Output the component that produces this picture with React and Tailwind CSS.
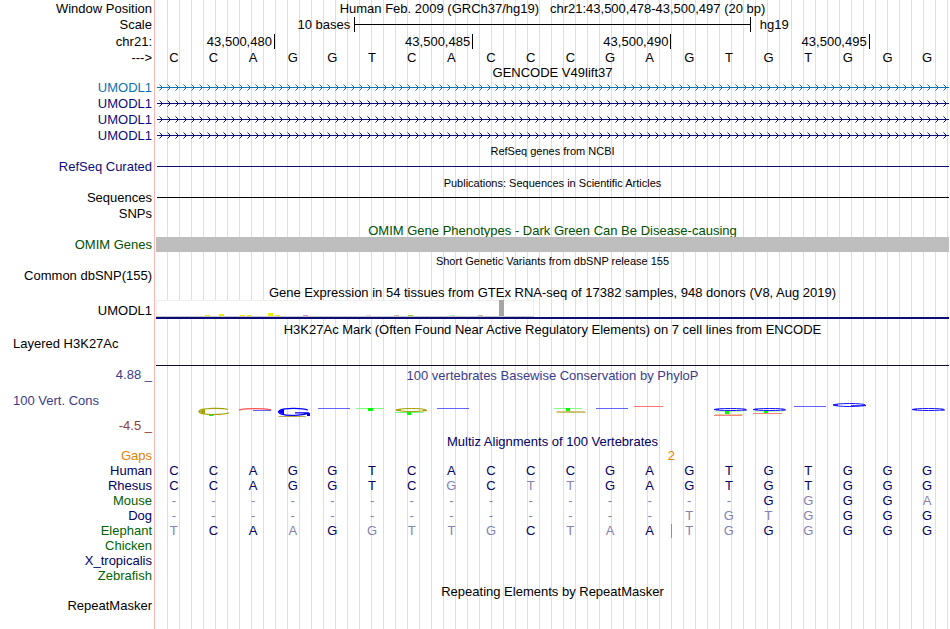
import clsx from 'clsx';

const SEQUENCE = 'CCAGGTCACCCGAGTGTGGG';

const TRANSCRIPTS = [
  { id: 'tx1', label: 'text-[#0c72b2]', stroke: '#0c72b2' },
  { id: 'tx2', label: 'text-[#0c0c78]', stroke: '#0c0c78' },
  { id: 'tx3', label: 'text-[#0c0c78]', stroke: '#0c0c78' },
  { id: 'tx4', label: 'text-[#0c0c78]', stroke: '#0c0c78' },
];

const POSITIONS = [
  { label: '43,500,480', width: 'w-[15%]' },
  { label: '43,500,485', width: 'w-1/4' },
  { label: '43,500,490', width: 'w-1/4' },
  { label: '43,500,495', width: 'w-1/4' },
];

// Lower case = base differs from human, drawn lighter
const SPECIES = [
  { name: 'Human', color: 'text-[#000064]', bases: 'CCAGGTCACCCGAGTGTGGG' },
  { name: 'Rhesus', color: 'text-[#000064]', bases: 'CCAGGTCgCttGAGTGTGGG' },
  { name: 'Mouse', color: 'text-[#006400]', bases: '---------------GgGGa' },
  { name: 'Dog', color: 'text-[#000064]', bases: '-------------tgtgGGG' },
  { name: 'Elephant', color: 'text-[#006400]', bases: 'tCAaGgttgCtaAtgGgGGG', insert: true },
  { name: 'Chicken', color: 'text-[#006400]' },
  { name: 'X_tropicalis', color: 'text-[#000064]' },
  { name: 'Zebrafish', color: 'text-[#006400]' },
];

const TISSUES = [
  { x: 49, h: 1, fill: '#eeee00' },
  { x: 63, h: 2, fill: '#eeee00' },
  { x: 84, h: 1, fill: '#eeee00' },
  { x: 91, h: 1, fill: '#eeee00' },
  { x: 112, h: 3, fill: '#eeee00' },
  { x: 119, h: 1, fill: '#eeee00' },
  { x: 147, h: 1, fill: '#da8fd6' },
  { x: 210, h: 1, fill: '#eed5d2' },
  { x: 238, h: 1, fill: '#cdb79e' },
  { x: 252, h: 1, fill: '#9acd32' },
  { x: 294, h: 1, fill: '#b4eeb4' },
  { x: 322, h: 1, fill: '#cdb79e' },
  { x: 343, h: 16, fill: '#a6a6a6' },
];

/** One browser line: label on the left, track drawing on the right. */
function Row({ label, labelClass = 'text-black', align = 'text-right pr-[2px]', height = 'h-[15px]', children }) {
  return (
    <div className={clsx('flex', height)}>
      <div className="w-[156px] shrink-0 bg-white pr-px">
        <div className={clsx('flex h-full flex-col justify-center border-r border-[#ffb4b4] whitespace-pre', align, labelClass)}>
          {label}
        </div>
      </div>
      <div className="relative flex min-w-0 flex-1 flex-col justify-center pr-px">{children}</div>
    </div>
  );
}

function TitleRow({ children, label, labelClass, height, low, className = 'text-black' }) {
  return (
    <Row label={label} labelClass={labelClass} height={height}>
      <h2 className={clsx('text-center whitespace-pre', low ? 'pt-[3px]' : 'pt-px', className)}>{children}</h2>
    </Row>
  );
}

function Bases({ bases, className }) {
  return (
    <div className={clsx('-ml-[2px] mr-[2px] grid grid-cols-20 text-center', className)}>
      {bases.split('').map((b, i) => (
        <span key={i} className={b === b.toUpperCase() && b !== '-' ? '' : 'text-[#8282b4]'}>
          {b.toUpperCase()}
        </span>
      ))}
    </div>
  );
}

function Transcript({ id, stroke }) {
  return (
    <div className="pl-px">
      <svg className="block h-4 w-full" aria-hidden="true">
        <defs>
          <pattern id={id} width="8" height="16" patternUnits="userSpaceOnUse">
            <path d="M2.5 5.5L5.5 8.5L2.5 11.5" fill="none" stroke={stroke} />
          </pattern>
        </defs>
        <rect width="100%" height="16" fill={`url(#${id})`} />
        <rect y="8" width="100%" height="1" fill={stroke} />
      </svg>
    </div>
  );
}

function GtexBars() {
  return (
    <svg className="block" width="378" height="17" viewBox="0 0 378 17" aria-hidden="true">
      <rect x="0.5" y="0.5" width="377" height="16" fill="#fff" stroke="#f0f0f0" />
      <rect y="16" width="378" height="1" fill="#c8c8c8" />
      {TISSUES.map((t) => (
        <rect key={t.x} x={t.x} y={16 - t.h} width="5" height={t.h} fill={t.fill} />
      ))}
    </svg>
  );
}

// Flattened logo shapes: ring = round base, bar = thin base, stem = centre of a T
function Ring({ x, y, w, h, color }) {
  return (
    <g fill="none" stroke={color}>
      <ellipse cx={x + w / 2} cy={y + h / 2} rx={w / 2 - 1} ry={h / 2 - 0.5} />
      <line x1={x} x2={x + 5} y1={y + h / 2} y2={y + h / 2} strokeWidth={h / 2.5} />
      <line x1={x + w - 4} x2={x + w} y1={y + h / 2 + 0.5} y2={y + h / 2 + 0.5} strokeWidth={h / 3} />
    </g>
  );
}

function Bar({ x, y, w, color, opacity = 0.8 }) {
  return <rect x={x} y={y} width={w} height="1" fill={color} opacity={opacity} />;
}

function Conservation() {
  return (
    <svg className="h-[34px] w-full" viewBox="0 0 793 34" preserveAspectRatio="none" aria-hidden="true">
      <g fill="none" stroke="#a0a000">
        <path d="M72 26.5C68 25.2 62 25.3 57 25.4C48 25.6 43 26.8 43 28.5C43 30.3 49 31.5 57 31.5C65 31.5 71 31 73 29.8" strokeWidth="1.2" />
        <path d="M42.5 28.5L49 26V31Z" fill="#a0a000" stroke="none" />
      </g>
      <rect x="53" y="32" width="4" height="1" fill="#00ff00" />

      <path d="M83 26.8C90 25.2 108 25.2 115 26.8" fill="none" stroke="#ff5050" strokeWidth="1.2" />
      <Bar x={97} y={27} w={18} color="#3c3cff" />

      <g fill="none" stroke="#0000ff">
        <path d="M152 27C147 25.2 129 24.6 124 27.2C119 30 128 33 139 32.3C145 32 151 31.4 152 29.9H139" strokeWidth="1.3" />
        <path d="M121.5 28.6L128 25.8V31.4Z" fill="#0000ff" stroke="none" />
        <line x1="152.5" x2="152.5" y1="30" y2="33" strokeWidth="3" />
      </g>
      <Ring x={122} y={33} w={29} h={2} color="#b4a03c" />

      <Bar x={162} y={25} w={32} color="#3c3cff" />
      <Bar x={200} y={25} w={28} color="#64ff64" />
      <rect x="212" y="25" width="5" height="3" fill="#00ff00" />

      <Ring x={240} y={25} w={31} h={4} color="#a0a000" />
      <Bar x={239} y={29} w={28} color="#64ff64" />
      <rect x="251" y="29" width="4" height="3" fill="#00ff00" />
      <Bar x={281} y={25} w={32} color="#3c3cff" />

      <Bar x={398} y={25} w={28} color="#64ff64" />
      <rect x="410" y="25" width="4" height="3" fill="#00ff00" />
      <Ring x={400} y={28} w={30} h={2} color="#c8be64" />
      <Bar x={440} y={25} w={32} color="#3c3cff" />
      <Bar x={478} y={23} w={29} color="#ff5050" />

      <Ring x={558} y={25} w={33} h={3} color="#1414ff" />
      <Bar x={558} y={28} w={30} color="#b4ffb4" />
      <rect x="569" y="28" width="4" height="3" fill="#00ff00" />
      <Bar x={559} y={31} w={28} color="#d2c878" />
      <Bar x={558} y={32} w={28} color="#ff6464" />

      <Ring x={597} y={25} w={33} h={3} color="#1414ff" />
      <Bar x={597} y={28} w={30} color="#b4ffb4" />
      <rect x="608" y="28" width="4" height="2" fill="#00ff00" />
      <Bar x={597} y={30} w={29} color="#ff6464" />

      <Bar x={638} y={23} w={32} color="#3c3cff" />
      <Ring x={677} y={20} w={33} h={4} color="#1414ff" />
      <Bar x={695} y={22} w={13} color="#1414ff" />
      <Ring x={756} y={25} w={33} h={3} color="#1414ff" />
    </svg>
  );
}

export default function App() {
  return (
    <main className="flex min-h-screen flex-col bg-white bg-[repeating-linear-gradient(to_right,transparent_0_11px,#dcdcf8_11px_12px)] font-['Liberation_Sans',Arial,sans-serif] text-[13px] leading-[15px] text-black">
      {/* Ruler */}
      <Row label="Window Position" height="h-4">
        <h1 className="text-center whitespace-pre">{'Human Feb. 2009 (GRCh37/hg19)   chr21:43,500,478-43,500,497 (20 bp)'}</h1>
      </Row>
      <Row label="Scale" height="h-[17px]">
        <div className="flex h-full items-center">
          <span className="w-1/4 pr-1 text-right">10 bases</span>
          <span className="flex h-[15px] w-1/2 items-center border-x border-black">
            <span className="h-px w-full bg-black" />
          </span>
          <span className="pl-[9px]">hg19</span>
        </div>
      </Row>
      <Row label="chr21:" height="h-[17px]">
        <div className="flex text-right">
          {POSITIONS.map((p) => (
            <span key={p.label} className={clsx('border-r border-black pr-[2px]', p.width)}>{p.label}</span>
          ))}
        </div>
      </Row>
      <Row label="--->">
        <Bases bases={SEQUENCE} />
      </Row>

      {/* Genes */}
      <TitleRow height="h-[14px]">GENCODE V49lift37</TitleRow>
      {TRANSCRIPTS.map((t) => (
        <Row key={t.id} label="UMODL1" labelClass={t.label} height="h-4">
          <Transcript id={t.id} stroke={t.stroke} />
        </Row>
      ))}
      <TitleRow className="text-[11px]" height="h-4">RefSeq genes from NCBI</TitleRow>
      <Row label="RefSeq Curated" labelClass="text-[#0c0c78]">
        <div className="ml-px h-px bg-[#0c0c78]" />
      </Row>
      <TitleRow low className="text-[11px]" height="h-4">Publications: Sequences in Scientific Articles</TitleRow>
      <Row label="Sequences">
        <div className="ml-px h-px bg-black" />
      </Row>
      <Row label="SNPs" height="h-4" />

      {/* Phenotype and variation */}
      <TitleRow low className="text-[#005000]" height="h-4">OMIM Gene Phenotypes - Dark Green Can Be Disease-causing</TitleRow>
      <Row label="OMIM Genes" labelClass="text-[#005000]">
        <div className="h-full bg-[#bebebe]" />
      </Row>
      <TitleRow low className="text-[11px]">Short Genetic Variants from dbSNP release 155</TitleRow>
      <Row label="Common dbSNP(155)" height="h-4" />

      {/* Expression and regulation */}
      <TitleRow height="h-[17px]">Gene Expression in 54 tissues from GTEx RNA-seq of 17382 samples, 948 donors (V8, Aug 2019)</TitleRow>
      <Row label="UMODL1" height="h-5">
        <div className="h-full">
          <GtexBars />
          <div className="h-[2px] bg-[#0c0c78]" />
        </div>
      </Row>
      <TitleRow low height="h-4">H3K27Ac Mark (Often Found Near Active Regulatory Elements) on 7 cell lines from ENCODE</TitleRow>
      <Row label="Layered H3K27Ac" align="text-left pl-[13px] pb-4" height="h-[30px]">
        <div className="mt-auto h-px bg-[#140a32]" />
      </Row>

      {/* Conservation */}
      <TitleRow label="4.88 _" labelClass="text-[#3c3c8c]" className="text-[#3c3c8c]" height="h-[17px]">
        100 vertebrates Basewise Conservation by PhyloP
      </TitleRow>
      <Row label="100 Vert. Cons" labelClass="text-[#3c3c8c]" align="text-left pl-[13px]" height="h-[34px]">
        <Conservation />
      </Row>
      <Row label="-4.5 _" labelClass="text-[#8c3c3c]" height="h-4" />

      <TitleRow className="text-[#000064]">Multiz Alignments of 100 Vertebrates</TitleRow>
      <Row label="Gaps" labelClass="text-[#e68200]">
        <span className="ml-[50%] w-[30%] text-center text-[#e68200]">2</span>
      </Row>
      {SPECIES.map((s) => (
        <Row key={s.name} label={s.name} labelClass={s.color}>
          {s.bases && <Bases bases={s.bases} className="text-[#000064]" />}
          {s.insert && <span className="absolute right-[35%] h-[14px] w-px bg-[#e68200]" />}
        </Row>
      ))}

      {/* Repeats */}
      <TitleRow>Repeating Elements by RepeatMasker</TitleRow>
      <Row label="RepeatMasker" />
      <Row height="grow" />
    </main>
  );
}
